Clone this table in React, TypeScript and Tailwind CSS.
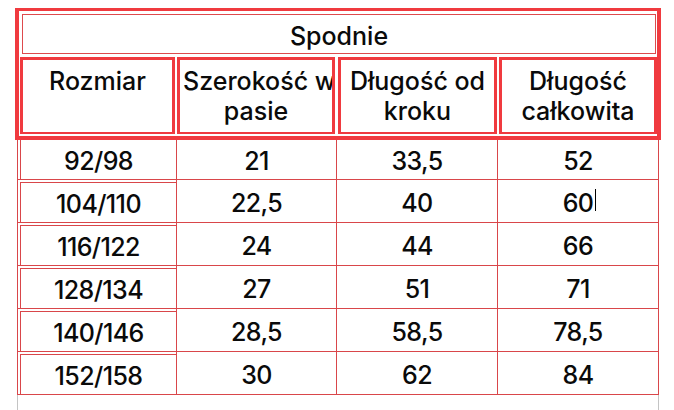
import React from "react";

const rows: [string, string, string, string][] = [
  ["92/98", "21", "33,5", "52"],
  ["104/110", "22,5", "40", "60"],
  ["116/122", "24", "44", "66"],
  ["128/134", "27", "51", "71"],
  ["140/146", "28,5", "58,5", "78,5"],
  ["152/158", "30", "62", "84"],
];

export default function App() {
  return (
    <div
      className="w-[674px] h-[410px] bg-white text-[25px] leading-[30px] font-medium text-[#0a0a0a] overflow-hidden"
      style={{ fontFamily: "Inter, 'Noto Sans', sans-serif" }}
    >
      <div className="pt-[8px] pl-[15px]">
        {/* outer thick frame */}
        <div className="w-[646px] h-[132px] border-l-4 border-r-4 border-t-[3px] border-b-4 border-[#f03a3f] flex flex-col">
          <div className="ml-[3px] mt-[3px] w-[634px] h-[40px] border border-[#de4a4d] text-center pt-[6px]">
            Spodnie
          </div>
          <div className="mt-[3px] ml-[1px] flex h-[77px]">
            <div className="w-[155px] border-[3px] border-b-2 border-[#f03a3f] text-center pt-[6px]">
              Rozmiar
            </div>
            <div className="ml-[2px] w-[158px] border-[3px] border-b-2 border-[#f03a3f] pt-[6px] overflow-hidden">
              <div className="whitespace-nowrap pl-[3px]">Szerokość w</div>
              <div className="text-center">pasie</div>
            </div>
            <div className="ml-[3px] w-[159px] border-[3px] border-b-2 border-[#f03a3f] text-center pt-[6px]">
              <div>Długość od</div>
              <div>kroku</div>
            </div>
            <div className="ml-[2px] w-[158px] border-[3px] border-b-2 border-[#f03a3f] text-center pt-[6px]">
              <div>Długość</div>
              <div>całkowita</div>
            </div>
          </div>
        </div>
      </div>

      {/* data table */}
      <div className="ml-[17px] w-[642px] border-l border-[#d9464a] tracking-[-0.6px]">
        {rows.map((r, i) => (
          <div
            key={i}
            className={
              "grid grid-cols-[159px_160px_161px_161px] border-b border-[#d9464a] " +
              (i === 0 ? "h-[40px]" : "h-[43px]")
            }
          >
            <div className="border-r border-[#d9464a] flex">
              <div
                className={
                  "flex-1 ml-[2px] border-l border-t border-[#d9464a] text-center " +
                  (i === 0 ? "mt-0 pt-[6px] border-t-0" : "mt-[2px] pt-[6px]")
                }
              >
                {r[0]}
              </div>
            </div>
            <div className={"border-r border-[#d9464a] text-center " + (i === 0 ? "pt-[6px]" : "pt-[8px]")}>
              {r[1]}
            </div>
            <div className={"border-r border-[#d9464a] text-center " + (i === 0 ? "pt-[6px]" : "pt-[8px]")}>
              {r[2]}
            </div>
            <div className={"border-r border-[#d9464a] text-center " + (i === 0 ? "pt-[6px]" : "pt-[8px]")}>
              {i === 1 ? (
                <span className="relative">
                  {r[3]}
                  <span className="absolute left-full ml-[2px] top-[1px] w-px h-[22px] bg-black" />
                </span>
              ) : (
                r[3]
              )}
            </div>
          </div>
        ))}
        <div className="h-[20px] w-[642px] border-r border-[#c4c4c4] -ml-px border-l" />
      </div>
    </div>
  );
}
